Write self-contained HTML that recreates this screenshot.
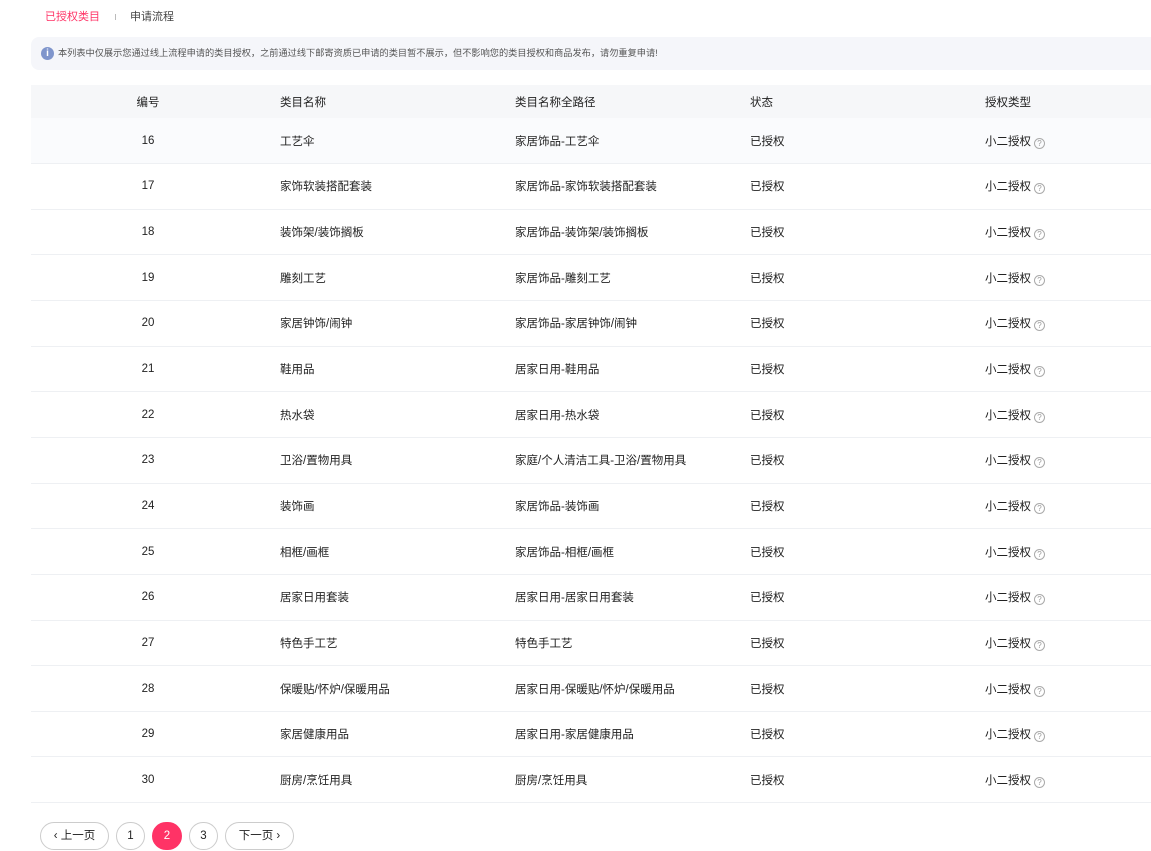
<!DOCTYPE html>
<html><head><meta charset="utf-8"><style>
*{margin:0;padding:0;box-sizing:border-box}
body{width:1151px;height:851px;background:#fff;font-family:"Liberation Sans","Noto Sans CJK SC",sans-serif;font-size:11.5px;color:#333;position:relative;overflow:hidden}
.tab{position:absolute;top:8px;font-size:11px}
.info{position:absolute;left:31px;top:37px;width:1130px;height:33px;background:#f5f6fa;border-radius:8px;font-size:9.2px;color:#555;line-height:32px;padding-left:27px}
.info i{position:absolute;left:10px;top:10px;width:13px;height:13px;border-radius:50%;background:#7f95cc;color:#fff;font-style:normal;font-size:10px;line-height:13px;text-align:center;font-weight:bold}
table{position:absolute;left:31px;top:85px;width:1130px;border-collapse:collapse}
th{height:33px;background:#f6f7f9;font-weight:normal;text-align:left;font-size:11.5px;color:#222}
td{height:45.65px;border-bottom:1px solid #eef0f3;font-size:11.5px;color:#222}
tr.f td{background:#fafbfd}
.c1{width:249px;text-align:center;padding-right:15px}
.c2{width:235px}.c3{width:235px}.c4{width:235px}
.q{display:inline-block;width:11px;height:11px;border:1px solid #aaa;border-radius:50%;font-size:8px;line-height:9px;text-align:center;color:#999;margin-left:3px;vertical-align:-1px}
.pg{position:absolute;top:822px;height:28px;border:1px solid #ccc;border-radius:14px;text-align:center;line-height:26px;font-size:11.5px;color:#222}
</style></head><body>
<div class="tab" style="left:45px;color:#ff3366">已授权类目</div>
<div style="position:absolute;left:115px;top:14px;width:1px;height:6px;background:#bbb"></div>
<div class="tab" style="left:130px;color:#444">申请流程</div>
<div class="info"><i>i</i>本列表中仅展示您通过线上流程申请的类目授权，之前通过线下邮寄资质已申请的类目暂不展示，但不影响您的类目授权和商品发布，请勿重复申请!</div>
<table>
<tr><th class="c1">编号</th><th class="c2">类目名称</th><th class="c3">类目名称全路径</th><th class="c4">状态</th><th>授权类型</th></tr>
<tr class="f"><td class="c1">16</td><td>工艺伞</td><td>家居饰品-工艺伞</td><td>已授权</td><td>小二授权<span class="q">?</span></td></tr>
<tr><td class="c1">17</td><td>家饰软装搭配套装</td><td>家居饰品-家饰软装搭配套装</td><td>已授权</td><td>小二授权<span class="q">?</span></td></tr>
<tr><td class="c1">18</td><td>装饰架/装饰搁板</td><td>家居饰品-装饰架/装饰搁板</td><td>已授权</td><td>小二授权<span class="q">?</span></td></tr>
<tr><td class="c1">19</td><td>雕刻工艺</td><td>家居饰品-雕刻工艺</td><td>已授权</td><td>小二授权<span class="q">?</span></td></tr>
<tr><td class="c1">20</td><td>家居钟饰/闹钟</td><td>家居饰品-家居钟饰/闹钟</td><td>已授权</td><td>小二授权<span class="q">?</span></td></tr>
<tr><td class="c1">21</td><td>鞋用品</td><td>居家日用-鞋用品</td><td>已授权</td><td>小二授权<span class="q">?</span></td></tr>
<tr><td class="c1">22</td><td>热水袋</td><td>居家日用-热水袋</td><td>已授权</td><td>小二授权<span class="q">?</span></td></tr>
<tr><td class="c1">23</td><td>卫浴/置物用具</td><td>家庭/个人清洁工具-卫浴/置物用具</td><td>已授权</td><td>小二授权<span class="q">?</span></td></tr>
<tr><td class="c1">24</td><td>装饰画</td><td>家居饰品-装饰画</td><td>已授权</td><td>小二授权<span class="q">?</span></td></tr>
<tr><td class="c1">25</td><td>相框/画框</td><td>家居饰品-相框/画框</td><td>已授权</td><td>小二授权<span class="q">?</span></td></tr>
<tr><td class="c1">26</td><td>居家日用套装</td><td>居家日用-居家日用套装</td><td>已授权</td><td>小二授权<span class="q">?</span></td></tr>
<tr><td class="c1">27</td><td>特色手工艺</td><td>特色手工艺</td><td>已授权</td><td>小二授权<span class="q">?</span></td></tr>
<tr><td class="c1">28</td><td>保暖贴/怀炉/保暖用品</td><td>居家日用-保暖贴/怀炉/保暖用品</td><td>已授权</td><td>小二授权<span class="q">?</span></td></tr>
<tr><td class="c1">29</td><td>家居健康用品</td><td>居家日用-家居健康用品</td><td>已授权</td><td>小二授权<span class="q">?</span></td></tr>
<tr><td class="c1">30</td><td>厨房/烹饪用具</td><td>厨房/烹饪用具</td><td>已授权</td><td>小二授权<span class="q">?</span></td></tr>
</table>
<div class="pg" style="left:40px;width:69px">‹ 上一页</div>
<div class="pg" style="left:116px;width:29px">1</div>
<div class="pg" style="left:152px;width:30px;background:#ff3366;border-color:#ff3366;color:#fff">2</div>
<div class="pg" style="left:189px;width:29px">3</div>
<div class="pg" style="left:225px;width:69px">下一页 ›</div>
</body></html>
